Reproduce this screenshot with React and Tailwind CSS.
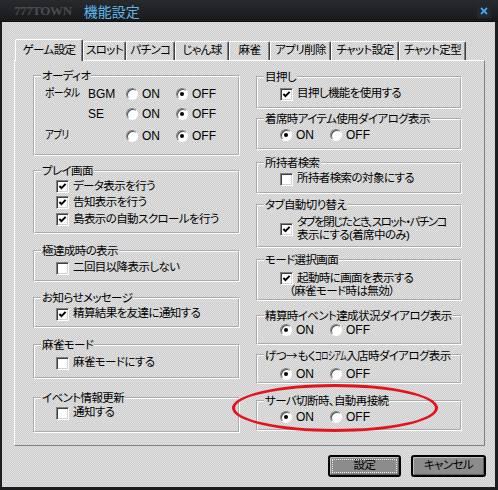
const CHK = "bg-[image:repeating-conic-gradient(#cbcbcb_0_25%,#e3e3e3_0_50%)] bg-[length:2px_2px]";
const FONT = "font-['Liberation_Sans','Noto_Sans_CJK_JP',sans-serif] [font-feature-settings:'palt']";

function Check({ on }) {
  return (
    <span className="w-[13px] h-[13px] shrink-0 bg-white border border-t-[#808080] border-l-[#808080] border-r-white border-b-white shadow-[inset_1px_1px_0_#404040,inset_-1px_-1px_0_#d4d4d4] flex items-center justify-center">
      {on && (
        <svg width="9" height="9" viewBox="0 0 9 9">
          <path d="M1.4 4 L3.5 6.2 L7.6 1.8" fill="none" stroke="#000" strokeWidth="1.9" />
        </svg>
      )}
    </span>
  );
}

function Radio({ on, label, w = "" }) {
  return (
    <span className={`flex items-center gap-[4px] ${w}`}>
      <span className="w-[12px] h-[12px] shrink-0 rounded-full bg-white border border-t-[#808080] border-l-[#808080] border-r-white border-b-white shadow-[inset_1px_1px_0_#505050] flex items-center justify-center">
        {on && <span className="w-[4px] h-[4px] rounded-full bg-black" />}
      </span>
      <span className="text-[12px] tracking-normal">{label}</span>
    </span>
  );
}

// condensed kana, like the half-width forms in the original
function Narrow({ text, w, s }) {
  return (
    <span className={`inline-block whitespace-nowrap ${w}`}>
      <span className={`inline-block origin-left ${s}`}>{text}</span>
    </span>
  );
}

function CheckRow({ on, label, h = "h-[14px]" }) {
  return (
    <div className={`flex items-center gap-[4px] whitespace-nowrap ${h}`}>
      <Check on={on} />
      <span>{label}</span>
    </div>
  );
}

function OnOff({ on = true }) {
  return (
    <div className="flex items-center h-[14px]">
      <Radio on={on} label="ON" w="w-[50px]" />
      <Radio on={!on} label="OFF" />
    </div>
  );
}

function Group({ title, cls, body, children }) {
  return (
    <fieldset className={`border-2 border-white [border-style:groove] [--tw-border-style:groove] ${cls}`}>
      <legend className="ml-[6px] px-[1px] h-[14px] leading-[14px] whitespace-nowrap">{title}</legend>
      <div className={body}>{children}</div>
    </fieldset>
  );
}

function Tab({ label, w, active }) {
  return (
    <div
      className={`${w} ${CHK} ${
        active ? "h-[22px] -mb-px relative z-10" : "h-[19px]"
      } flex items-center justify-center whitespace-nowrap border-t border-l border-r border-t-white border-l-white border-r-[#404040] shadow-[inset_-1px_0_0_#808080] rounded-t-[2px]`}
    >
      {label}
    </div>
  );
}

function Button({ label, w, focus }) {
  return (
    <div
      className={`${w} h-[22px] rounded-[3px] border-2 border-black bg-[#8c8c8c] shadow-[inset_1px_1px_0_#c2c2c2,inset_-1px_-1px_0_#5e5e5e] flex items-center justify-center ${
        focus ? "outline-1 outline-dotted outline-[#ececec] outline-offset-[-5px]" : ""
      }`}
    >
      {label}
    </div>
  );
}

export default function App() {
  return (
    <div className={`relative w-[498px] h-[490px] bg-[#1b1d1f] flex flex-col text-[11.5px] tracking-[-0.6px] text-black ${FONT}`}>
      {/* title bar */}
      <div className="h-[22px] shrink-0 flex items-center bg-[linear-gradient(#282b2e,#17191b)] border-b border-[#0c0d0e] pl-[14px] pr-[7px] tracking-normal">
        <span className="font-['Liberation_Serif',serif] font-bold text-[13px] tracking-[-0.4px] text-[#4b4d50]">777TOWN</span>
        <span className="ml-[12px] text-[14px] leading-none text-[#5db7ec] font-['Noto_Sans_CJK_JP',sans-serif]">機能設定</span>
        <span className="ml-auto w-[14px] h-[14px] flex items-center justify-center bg-[#23282d]">
          <svg width="8" height="8" viewBox="0 0 8 8">
            <path d="M1 1 L7 7 M7 1 L1 7" stroke="#3ea3ee" strokeWidth="1.8" />
          </svg>
        </span>
      </div>

      {/* body */}
      <div className={`flex-1 ml-[2px] mr-[3px] mb-[3px] pl-[12px] pr-[10px] pt-[17px] flex flex-col ${CHK}`}>
        <div className="flex items-end h-[21px] pl-[1px]">
          <Tab label="ゲーム設定" w="w-[68px]" active />
          <Tab label="スロット" w="w-[43px]" />
          <Tab label="パチンコ" w="w-[49px]" />
          <Tab label="じゃん球" w="w-[54px]" />
          <Tab label="麻雀" w="w-[41px]" />
          <Tab label="アプリ削除" w="w-[61px]" />
          <Tab label="チャット設定" w="w-[68px]" />
          <Tab label="チャット定型" w="w-[67px]" />
        </div>

        <div className="w-[471px] h-[386px] border border-t-white border-l-white border-r-[#808080] border-b-[#808080] flex gap-[16px] pl-[18px] pt-[8px]">
          {/* left column */}
          <div className="w-[207px] flex flex-col">
            <Group title="オーディオ" cls="h-[87px]" body="pl-[10px] flex flex-col">
              <div className="flex items-center h-[14px] mt-[4px]">
                <Narrow text="ポータル" w="w-[43px]" s="scale-x-[0.85]" />
                <span className="w-[38px] text-[12px] tracking-normal">BGM</span>
                <Radio label="ON" w="w-[50px]" />
                <Radio on label="OFF" />
              </div>
              <div className="flex items-center h-[14px] mt-[6px]">
                <span className="w-[81px] pl-[43px] text-[12px] tracking-normal">SE</span>
                <Radio label="ON" w="w-[50px]" />
                <Radio on label="OFF" />
              </div>
              <div className="flex items-center h-[14px] mt-[8px]">
                <Narrow text="アプリ" w="w-[81px]" s="scale-x-[0.82]" />
                <Radio label="ON" w="w-[50px]" />
                <Radio on label="OFF" />
              </div>
            </Group>
            <Group title="プレイ画面" cls="h-[70px] mt-[8px]" body="pl-[21px]">
              <CheckRow on label="データ表示を行う" h="h-[16.5px]" />
              <CheckRow on label="告知表示を行う" h="h-[16.5px]" />
              <CheckRow on label="島表示の自動スクロールを行う" h="h-[16.5px]" />
            </Group>
            <Group title="極達成時の表示" cls="h-[38px] mt-[10px]" body="pl-[21px] pt-[3px]">
              <CheckRow label="二回目以降表示しない" />
            </Group>
            <Group title="お知らせメッセージ" cls="h-[37px] mt-[9px]" body="pl-[21px] pt-[2px]">
              <CheckRow on label="精算結果を友達に通知する" />
            </Group>
            <Group title="麻雀モード" cls="h-[41px] mt-[10px]" body="pl-[21px] pt-[4px]">
              <CheckRow label="麻雀モードにする" />
            </Group>
            <Group title="イベント情報更新" cls="h-[42px] mt-[12px]" body="pl-[21px] pt-[1px]">
              <CheckRow label="通知する" />
            </Group>
          </div>

          {/* right column */}
          <div className="w-[206px] flex flex-col pt-[1px]">
            <Group title="目押し" cls="h-[39px]" body="pl-[22px] pt-[3px]">
              <CheckRow on label="目押し機能を使用する" />
            </Group>
            <Group title="着席時アイテム使用ダイアログ表示" cls="h-[38px] mt-[3px]" body="pl-[22px] pt-[2px]">
              <OnOff />
            </Group>
            <Group title="所持者検索" cls="h-[38px] mt-[6px]" body="pl-[22px] pt-[2px]">
              <CheckRow label="所持者検索の対象にする" />
            </Group>
            <Group title="タブ自動切り替え" cls="h-[50px] mt-[4px]" body="pl-[22px] pt-[4px]">
              <div className="flex items-center gap-[4px] whitespace-nowrap">
                <Check on />
                <div className="leading-[13px]">
                  <div className="tracking-[-1.5px]">タブを閉じたとき、スロット・パチンコ</div>
                  <div>表示にする(着席中のみ)</div>
                </div>
              </div>
            </Group>
            <Group title="モード選択画面" cls="h-[48px] mt-[5px]" body="pl-[22px] pt-[5px] leading-[13px] whitespace-nowrap">
              <div className="flex items-center gap-[4px] h-[13px]">
                <Check on />
                <span>起動時に画面を表示する</span>
              </div>
              <div className="pl-[9px]">（麻雀モード時は無効）</div>
            </Group>
            <Group title="精算時イベント達成状況ダイアログ表示" cls="h-[36px] mt-[8px]" body="pl-[22px]">
              <OnOff />
            </Group>
            <Group
              title={
                <>
                  げつ<span className="font-['Noto_Sans_CJK_JP',sans-serif] tracking-normal">→</span>もく
                  <Narrow text="コロシアム" w="w-[31px]" s="scale-x-[0.62]" />
                  入店時ダイアログ表示
                </>
              }
              cls="h-[36px] mt-[3px]"
              body="pl-[22px] pt-[5px]"
            >
              <OnOff />
            </Group>
            <Group title="サーバ切断時、自動再接続" cls="h-[37px] mt-[10px]" body="pl-[22px] pt-[2px]">
              <OnOff />
            </Group>
          </div>
        </div>

        <div className="flex justify-end gap-[10px] mt-[9px] -mr-px">
          <Button label="設定" w="w-[73px]" focus />
          <Button label="キャンセル" w="w-[75px]" />
        </div>
      </div>

      {/* red highlight */}
      <div className="absolute left-[232px] top-[384px] w-[206px] h-[48px] rounded-[50%] border-[3px] border-[#e5121b] pointer-events-none" />
    </div>
  );
}
